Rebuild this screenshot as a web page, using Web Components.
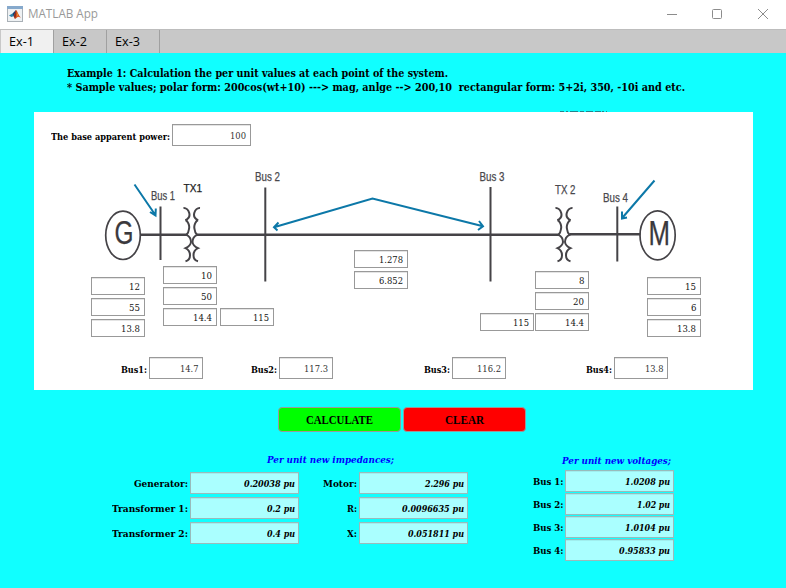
<!DOCTYPE html>
<html lang="en">
<head>
<meta charset="utf-8">
<title>MATLAB App</title>
<style>
html, body { margin: 0; width: 786px; height: 588px; overflow: hidden; background: #10ffff; }
</style>
</head>
<body>
<matlab-app></matlab-app>
<script>
const shadow = (el, html) => { el.attachShadow({ mode: 'open' }).innerHTML = html; };

/* Single line of text condensed or expanded to the width given in "w". */
class FitText extends HTMLElement {
  connectedCallback() {
    const w = this.getAttribute('w');
    shadow(this, `<style>
      :host { display: inline-block; white-space: pre; flex: none; ${w ? `width:${w}px;` : ''} }
      span { display: inline-block; transform-origin: 0 50%; white-space: pre; }
    </style><span>${this.getAttribute('text')}</span>`);
    const s = this.shadowRoot.querySelector('span');
    if (w) s.style.transform = `scaleX(${w / s.getBoundingClientRect().width})`;
  }
}
customElements.define('fit-text', FitText);

class ValueField extends HTMLElement {
  connectedCallback() {
    shadow(this, `<style>
      :host { display: flex; box-sizing: border-box; width: 54px; height: 18px; flex: none; justify-content: flex-end; align-items: center;
        background: #fff; border: 1px solid #999; box-shadow: inset 0 1px #e4e4e4; padding: 2px 4px 0 0; color: #151515;
        font: 10px/14px "DejaVu Serif Condensed", "DejaVu Serif", serif; font-stretch: condensed; }
      :host([size="tall"]) { height: 22px; padding-top: 1px; color: #333; }
      :host([size="wide"]) { width: 79px; height: 22px; padding-top: 1px; color: #333; }
      :host([kind="result"]) { width: 109px; height: 22px; background: #aff; border-color: #9bb; box-shadow: inset 0 1px #a0eeee;
        padding-top: 1px; padding-right: 3px; color: #000; font-weight: bold; font-style: italic; }
    </style><fit-text w="${this.getAttribute('w') || ''}" text="${this.getAttribute('value')}"></fit-text>`);
  }
}
customElements.define('value-field', ValueField);

class FieldRow extends HTMLElement {
  connectedCallback() {
    shadow(this, `<style>
      :host { display: flex; justify-content: flex-end; align-items: center; gap: 2px; color: #000; }
      .label { font: bold 10px/14px "DejaVu Serif Condensed", "DejaVu Serif", serif; font-stretch: condensed; padding-top: var(--label-drop, 2px); display: flex; }
    </style><div class="label"><fit-text w="${this.getAttribute('lw')}" text="${this.getAttribute('label')}"></fit-text></div><slot></slot>`);
  }
}
customElements.define('field-row', FieldRow);

class TitleBar extends HTMLElement {
  connectedCallback() {
    shadow(this, `<style>
      :host { display: flex; box-sizing: border-box; height: 29px; background: #fff; align-items: center; padding: 0 17px 2px 7px; color: #999;
        font: 12px/16px "Open Sans", sans-serif; }
      .logo { margin-right: 5px; }
      .space { flex: 1; }
      .controls { display: flex; gap: 34px; }
      svg { display: block; }
    </style>
    <svg class="logo" width="16" height="16" viewBox="0 0 16 16"><rect x=".5" y=".5" width="15" height="15" fill="#eef1f3" stroke="#a9b0b6"/><rect width="16" height="3" fill="#86a9cc"/>
      <path d="M2 9.5 5.5 7.5 7 10 4.5 11z" fill="#2780ab"/><path d="M5.5 7.5 9 4 8.5 9 7 11z" fill="#173f70"/><path d="M9 4C10.5 5 11.5 9.5 14 11.5L11 10.7 8 13 6.8 10.3Z" fill="#d9521e"/><path d="M9 4C10 6 9.6 9 8 13L6.8 10.3Z" fill="#8e2a1d"/><path d="M9.6 5 11 9 10 10.5Z" fill="#f6a02c"/></svg>
    <fit-text w="70" text="MATLAB App"></fit-text><span class="space"></span>
    <div class="controls">
      <svg width="12" height="12"><path d="M2 6.5H12" stroke="#8c8c8c"/></svg>
      <svg width="12" height="12"><rect x="1.5" y="1.5" width="9" height="9" rx="1" fill="none" stroke="#8c8c8c"/></svg>
      <svg width="12" height="12"><path d="M1 1 11 11M11 1 1 11" stroke="#8c8c8c"/></svg>
    </div>`);
  }
}
customElements.define('title-bar', TitleBar);

class TabStrip extends HTMLElement {
  connectedCallback() {
    shadow(this, `<style>
      :host { display: flex; box-sizing: border-box; height: 24px; background: #c8c8c8; border-top: 1px solid #bdbdbd; padding-left: 1px; color: #000;
        font: 12px/23px "Open Sans", sans-serif; }
      div { width: 53px; box-sizing: border-box; border-right: 1px solid #a0a0a0; padding-left: 8px; height: 23px; }
      .on { background: #f0f0f0; }
    </style><div class="on"><fit-text w="25" text="Ex-1"></fit-text></div><div><fit-text w="25" text="Ex-2"></fit-text></div><div><fit-text w="25" text="Ex-3"></fit-text></div>`);
  }
}
customElements.define('tab-strip', TabStrip);

/* One-line diagram: drawing below, parameter fields pinned on top of it. */
class PowerDiagram extends HTMLElement {
  connectedCallback() {
    const pins = [
      [91,277,'12',11],[91,298,'55',11],[91,319,'13.8',19],
      [163,266,'10',11],[163,287,'50',11],[163,308,'14.4',19],[220,308,'115',16],
      [354,250,'1.278',24],[354,271,'6.852',24],
      [535,271,'8',5.5],[535,292,'20',11],[535,313,'14.4',19],[480,313,'115',16],
      [647,277,'15',11],[647,298,'6',5.5],[647,319,'13.8',19]];
    const t = (x, y, w, s, size = 12.5, color = '#49484c') => `<text x="${x}" y="${y}" textLength="${w}" lengthAdjust="spacingAndGlyphs" font-size="${size}" fill="${color}" stroke="${color}" stroke-width=".25">${s}</text>`;
    /* Transformer winding; d is the side its loops bulge to. */
    const coil = (x, d) => `<path d="M${x} 208C${x+5*d} 207.5 ${x+9.5*d} 217 ${x+1.8*d} 220.2M${x+2*d} 220C${x+4*d} 221 ${x+6.5*d} 225 ${x+5.5*d} 229Q${x+5*d} 233 ${x+3*d} 234.8Q${x+7.5*d} 237 ${x+7.5*d} 242Q${x+7*d} 246 ${x+2*d} 248.2C${x+8*d} 251 ${x+8*d} 260 ${x+2*d} 261.3"/>`;
    shadow(this, `<style>
      :host { display: block; position: relative; height: 190px; }
      svg { display: block; }
      value-field { position: absolute; }
    </style>
    <svg width="719" height="190" viewBox="34 155 719 190" font-family="Liberation Sans, sans-serif">
      <g fill="none" stroke="#454347" stroke-width="2">
        <ellipse cx="123" cy="235.3" rx="17.3" ry="24.2" stroke-width="1.7"/><ellipse cx="657.6" cy="235.3" rx="17.6" ry="24.5" stroke-width="1.7"/>
        <path stroke-width="2.6" d="M140.5 234.8H187.5M197 234.8H559.5M569.5 234.2H640.5"/>
        <path d="M160.5 206.5V260M265.3 187.5V281.5M490.5 187V281.5M617.3 206.5V261.5"/>
        ${coil(183.5, 1)}${coil(200, -1)}${coil(555.5, 1)}${coil(572.5, -1)}
      </g>
      <g fill="none" stroke="#0c78a8" stroke-width="2">
        <path d="M134.5 184.5 155 214.5M150 212 155.5 215.5 155.8 208.5"/>
        <path d="M274 227.3 372.5 198.5 483 226.2M278.5 222.5 274 227.3 277.5 230.5M479 221 483 226.2 478 230"/>
        <path d="M654.5 180.5 623 217M622 211.5V218.5L627 217.5"/>
      </g>
      ${t(151,200,24,'Bus 1')}${t(183.5,192,18.5,'TX1',10,'#222')}${t(255,180.5,25,'Bus 2')}${t(479.5,180.5,25,'Bus 3')}${t(555,193.5,20.5,'TX 2')}${t(603,201.5,25,'Bus 4')}
      <g stroke="#3b393d" stroke-width=".4">${t(114.5,244.2,19,'G',34,'#3b393d')}${t(648.5,244.5,21.5,'M',35,'#3b393d')}</g>
    </svg>
    ${pins.map(p => `<value-field style="left:${p[0]-34}px;top:${p[1]-155}px" value="${p[2]}" w="${p[3]}"></value-field>`).join('')}`);
  }
}
customElements.define('power-diagram', PowerDiagram);

class SystemPanel extends HTMLElement {
  connectedCallback() {
    shadow(this, `<style>
      :host { display: block; box-sizing: border-box; width: 719px; height: 278px; background: #fff; padding-top: 12px; --label-drop: 4px; }
      .base { width: 217px; height: 31px; }
      .buses { display: grid; grid-template-columns: 169px 130px 173px 162px; margin-top: 12px; }
    </style>
    <div class="base"><field-row label="The base apparent power:" lw="119"><value-field size="wide" value="100" w="16"></value-field></field-row></div>
    <power-diagram></power-diagram>
    <div class="buses">
      <field-row label="Bus1:" lw="26"><value-field size="tall" value="14.7" w="18.5"></value-field></field-row>
      <field-row label="Bus2:" lw="26"><value-field size="tall" value="117.3" w="24"></value-field></field-row>
      <field-row label="Bus3:" lw="26"><value-field size="tall" value="116.2" w="24"></value-field></field-row>
      <field-row label="Bus4:" lw="26"><value-field size="tall" value="13.8" w="18.5"></value-field></field-row>
    </div>`);
  }
}
customElements.define('system-panel', SystemPanel);

class PushButton extends HTMLElement {
  connectedCallback() {
    shadow(this, `<style>
      :host { display: flex; box-sizing: border-box; width: 123px; height: 25px; border: 1px solid #999; border-radius: 4px; align-items: center; justify-content: center;
        font: bold 12px/16px "Liberation Serif", serif; color: #000; background: ${this.getAttribute('color')}; }
    </style><fit-text w="${this.getAttribute('w')}" text="${this.getAttribute('text')}"></fit-text>`);
  }
}
customElements.define('push-button', PushButton);

class ResultGroup extends HTMLElement {
  connectedCallback() {
    shadow(this, `<style>
      :host { display: block; }
      .head { font: italic bold 10px/14px "DejaVu Serif Condensed", "DejaVu Serif", serif; font-stretch: condensed; color: #00f; height: 14px;
        display: flex; padding-left: ${this.getAttribute('indent')}px; }
    </style><div class="head"><fit-text w="${this.getAttribute('hw')}" text="${this.getAttribute('head')}"></fit-text></div><slot></slot>`);
  }
}
customElements.define('result-group', ResultGroup);

class MatlabApp extends HTMLElement {
  connectedCallback() {
    const row = (l, lw, v, w) => `<field-row label="${l}" lw="${lw}"><value-field kind="result" value="${v}" w="${w}"></value-field></field-row>`;
    shadow(this, `<style>
      :host { display: block; width: 786px; height: 588px; background: #10ffff; }
      .intro { height: 57px; box-sizing: border-box; padding: 14px 0 0 67px; display: flex; flex-direction: column; color: #000;
        font: bold 11px/14px "DejaVu Serif Condensed", "DejaVu Serif", serif; font-stretch: condensed; }
      .edge { display: block; margin-left: 560px; }
      system-panel { margin-left: 34px; }
      .buttons { display: flex; gap: 2px; padding: 17px 0 0 278px; }
      .results { display: flex; }
      .imp { margin-top: 21px; width: 468px; }
      .volt { margin-top: 22px; width: 206px; }
      .cols { display: grid; grid-template-columns: 299px 169px; row-gap: 3px; padding-top: 5px; }
      .rows { display: grid; row-gap: 1px; padding-top: 2px; }
    </style>
    <title-bar></title-bar><tab-strip></tab-strip>
    <div class="intro"><fit-text w="381" text="Example 1: Calculation the per unit values at each point of the system."></fit-text>
      <fit-text w="618" text="* Sample values; polar form: 200cos(wt+10) ---&gt; mag, anlge --&gt; 200,10  rectangular form: 5+2i, 350, -10i and etc."></fit-text></div>
    <svg class="edge" width="48" height="2"><path d="M0 1.5H4M6 1.5H8M10 1.5H18M20 1.5H24M26 1.5H33M35 1.5H41M42 1.5H44M46 1.5H47" stroke="#2a5a66" stroke-opacity=".75"/></svg>
    <system-panel></system-panel>
    <div class="buttons"><push-button color="#0f0" text="CALCULATE" w="67"></push-button><push-button color="#f00" text="CLEAR" w="39"></push-button></div>
    <div class="results">
      <result-group class="imp" head="Per unit new impedances;" hw="127" indent="267"><div class="cols">
        ${row('Generator:',54,'0.20038 pu',51)}${row('Motor:',34,'2.296 pu',39)}
        ${row('Transformer 1:',76,'0.2 pu',28)}${row('R:',10,'0.0096635 pu',62)}
        ${row('Transformer 2:',76,'0.4 pu',28)}${row('X:',10,'0.051811 pu',56)}
      </div></result-group>
      <result-group class="volt" head="Per unit new voltages;" hw="109" indent="94"><div class="rows">
        ${row('Bus 1:',30.5,'1.0208 pu',45)}${row('Bus 2:',30.5,'1.02 pu',33)}${row('Bus 3:',30.5,'1.0104 pu',45)}${row('Bus 4:',30.5,'0.95833 pu',51)}
      </div></result-group>
    </div>`);
  }
}
customElements.define('matlab-app', MatlabApp);
</script>
</body>
</html>
